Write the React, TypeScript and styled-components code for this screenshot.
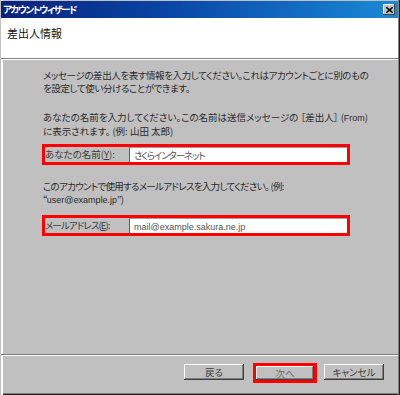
import React from 'react';
import styled, { createGlobalStyle } from 'styled-components';

const GlobalStyle = createGlobalStyle`
  html, body {
    margin: 0;
    padding: 0;
    background: #c0c0c0;
  }
  * {
    box-sizing: border-box;
  }
`;

const Window = styled.div`
  width: 400px;
  height: 395px;
  padding: 1px 2px 2px 1px;
  display: flex;
  flex-direction: column;
  background: #c0c0c0;
  font-family: 'Noto Sans CJK JP', sans-serif;
  font-feature-settings: 'palt';
  color: #2a2a2a;
  box-shadow: inset 1px 0 0 #c0c0c0, inset 3px 0 0 #ffffff, inset -1px 0 0 #202020,
    inset -2px 0 0 #808080, inset 0 -1px 0 #202020, inset 0 -2px 0 #808080;
`;

const TitleBar = styled.div`
  height: 17px;
  display: flex;
  align-items: center;
  padding: 0 3px 0 2px;
  background: linear-gradient(to right, #08227c, #0a48a8 45%, #1a8ad6);
`;

const TitleText = styled.span`
  flex: 1;
  color: #fff;
  font-size: 9.5px;
  font-weight: bold;
  letter-spacing: -1.4px;
  line-height: 17px;
`;

const CloseButton = styled.div`
  width: 12px;
  height: 11px;
  display: flex;
  align-items: center;
  justify-content: center;
  background: #c0c0c0;
  box-shadow: inset -1px -1px 0 #404040, inset 1px 1px 0 #ffffff;
`;

const Header = styled.div`
  height: 41px;
  padding: 8px 0 0 6px;
  background: #fff;
  border-bottom: 1px solid #808080;
  box-shadow: 0 1px 0 #ffffff;
`;

const HeaderTitle = styled.div`
  font-size: 11px;
  line-height: 14px;
  color: #111;
`;

const Body = styled.div`
  flex: 1;
  padding: 9px 0 0 41px;
  margin-top: 1px;
`;

const Para = styled.p<{ $top: number; $spacing?: number }>`
  margin: ${(p) => p.$top}px 0 0 1px;
  font-size: 9.5px;
  line-height: 12.5px;
  letter-spacing: ${(p) => p.$spacing ?? 0}px;
  white-space: nowrap;
`;

const FieldBox = styled.div<{ $top: number }>`
  width: 308px;
  height: 21px;
  margin-top: ${(p) => p.$top}px;
  border: 3px solid #ff0000;
  display: flex;
`;

const FieldLabel = styled.div<{ $spacing?: number }>`
  width: 84px;
  font-size: 9.5px;
  line-height: 15px;
  letter-spacing: ${(p) => p.$spacing ?? 0}px;
  color: #3a3a3a;
  white-space: nowrap;
`;

const FieldInput = styled.div<{ $spacing?: number }>`
  flex: 1;
  background: #fff;
  border-left: 1px solid #606060;
  border-top: 1px solid #a0a0a0;
  padding-left: 4px;
  font-size: 9.5px;
  line-height: 14px;
  letter-spacing: ${(p) => p.$spacing ?? 0}px;
  color: #555;
  white-space: nowrap;
`;

const Latin = styled.span`
  font-family: 'Liberation Sans', sans-serif;
  font-size: 9px;
  letter-spacing: 0;
`;

const Footer = styled.div`
  height: 39px;
  border-top: 1px solid #808080;
  box-shadow: inset 0 1px 0 #ffffff;
  display: flex;
  justify-content: flex-end;
  align-items: flex-start;
  padding: 9px 14px 0 0;
`;

const Button = styled.div<{ $muted?: boolean }>`
  width: 60px;
  height: 16px;
  display: flex;
  align-items: center;
  justify-content: center;
  font-size: 9.5px;
  color: ${(p) => (p.$muted ? '#6a6a6a' : '#3a3a3a')};
  background: #c0c0c0;
  box-shadow: inset -1px -1px 0 #404040, inset 1px 1px 0 #ffffff, inset -2px -2px 0 #808080;
`;

const Highlight = styled.div<{ $left: number; $right: number }>`
  margin: -1px ${(p) => p.$right}px 0 ${(p) => p.$left}px;
  border: 3px solid #ff0000;
  ${Button} {
    width: 58px;
    height: 14px;
  }
`;

const App: React.FC = () => {
  return (
    <>
      <GlobalStyle />
      <Window>
        <TitleBar>
          <TitleText>アカウントウィザード</TitleText>
          <CloseButton>
            <svg width="7" height="6" viewBox="0 0 7 6">
              <path d="M0 0L7 6M7 0L0 6" stroke="#000" strokeWidth="1.4" />
            </svg>
          </CloseButton>
        </TitleBar>
        <Header>
          <HeaderTitle>差出人情報</HeaderTitle>
        </Header>
        <Body>
          <Para $top={0} $spacing={-0.4}>
            メッセージの差出人を表す情報を入力してください。これはアカウントごとに別のもの
            <br />
            を設定して使い分けることができます。
          </Para>
          <Para $top={17}>
            あなたの名前を入力してください。この名前は送信メッセージの ［差出人］ (<Latin>From</Latin>)
            <br />
            に表示されます。 (例: 山田 太郎)
          </Para>
          <FieldBox $top={7}>
            <FieldLabel>
              あなたの名前(<u>Y</u>):
            </FieldLabel>
            <FieldInput $spacing={-1.1}>さくらインターネット</FieldInput>
          </FieldBox>
          <Para $top={15} $spacing={-0.7}>
            このアカウントで使用するメールアドレスを入力してください。 (例:
            <br />
            “<Latin>user@example.jp</Latin>”)
          </Para>
          <FieldBox $top={9}>
            <FieldLabel $spacing={-0.9}>
              メールアドレス(<u>E</u>):
            </FieldLabel>
            <FieldInput>
              <Latin>mail@example.sakura.ne.jp</Latin>
            </FieldInput>
          </FieldBox>
        </Body>
        <Footer>
          <Button>戻る</Button>
          <Highlight $left={9} $right={7}>
            <Button $muted>次へ</Button>
          </Highlight>
          <Button>キャンセル</Button>
        </Footer>
      </Window>
    </>
  );
};

export default App;
